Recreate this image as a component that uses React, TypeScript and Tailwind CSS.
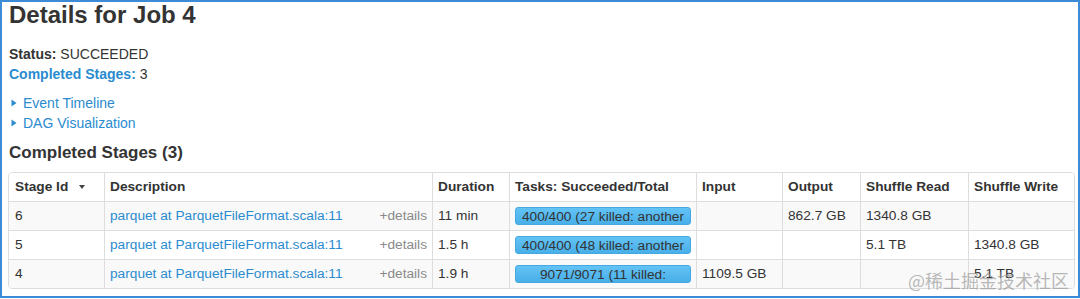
import React from "react";

type Stage = {
  id: string;
  desc: string;
  duration: string;
  tasks: string;
  input: string;
  output: string;
  shuffleRead: string;
  shuffleWrite: string;
};

const stages: Stage[] = [
  {
    id: "6",
    desc: "parquet at ParquetFileFormat.scala:11",
    duration: "11 min",
    tasks: "400/400 (27 killed: another attempt succeeded)",
    input: "",
    output: "862.7 GB",
    shuffleRead: "1340.8 GB",
    shuffleWrite: "",
  },
  {
    id: "5",
    desc: "parquet at ParquetFileFormat.scala:11",
    duration: "1.5 h",
    tasks: "400/400 (48 killed: another attempt succeeded)",
    input: "",
    output: "",
    shuffleRead: "5.1 TB",
    shuffleWrite: "1340.8 GB",
  },
  {
    id: "4",
    desc: "parquet at ParquetFileFormat.scala:11",
    duration: "1.9 h",
    tasks: "9071/9071 (11 killed: another attempt succeeded)",
    input: "1109.5 GB",
    output: "",
    shuffleRead: "",
    shuffleWrite: "5.1 TB",
  },
];

const cols = "grid grid-cols-[95px_328px_77px_187px_86px_78px_108px_107px]";

function Arrow() {
  return (
    <svg width="6" height="8" viewBox="0 0 6 8" className="shrink-0">
      <path d="M0.5 0.5 L5.5 4 L0.5 7.5 Z" fill="#2a8bcf" />
    </svg>
  );
}

function Bar({ text }: { text: string }) {
  return (
    <div className="h-[18px] w-full overflow-hidden rounded-[3px] border border-[#45a8e3] bg-gradient-to-b from-[#63c3f5] to-[#48afe9] px-[2px] text-center text-[13.7px] leading-[17px] text-[#333]">
      {text}
    </div>
  );
}

function App() {
  return (
    <div className="h-[299px] w-[1080px] bg-white font-['Liberation_Sans',Arial,sans-serif] text-[#333]">
      <div className="relative h-[298px] w-[1080px] overflow-hidden border-2 border-[#3d8bd6] pl-[6px] pr-[1px]">
        <h3 className="mt-[1px] pl-[1px] text-[24px] font-bold leading-[24px] text-[#333]">Details for Job 4</h3>

        <div className="mt-[17px] pl-[1px] text-[14px] leading-[20px]">
          <div>
            <strong>Status:</strong> SUCCEEDED
          </div>
          <div>
            <a href="#completed" className="font-bold text-[#2a8bcf]">Completed Stages:</a> 3
          </div>
        </div>

        <div className="mt-[9px] pl-[3px] text-[14px] leading-[20px] text-[#2a8bcf]">
          <div className="flex items-center gap-[6px]">
            <Arrow />
            <span>Event Timeline</span>
          </div>
          <div className="flex items-center gap-[6px]">
            <Arrow />
            <span>DAG Visualization</span>
          </div>
        </div>

        <h4 id="completed" className="mt-[10px] pl-[1px] text-[17px] font-bold leading-[20px]">Completed Stages (3)</h4>

        <div className="mt-[9px] w-[1067px] overflow-hidden rounded-[4px] border border-[#ddd] text-[13.7px]">
          <div className={`${cols} h-[28px] items-center bg-white font-bold`}>
            <div className="flex h-full items-center px-[6px]">
              Stage Id
              <svg width="6" height="4" viewBox="0 0 6 4" className="ml-[11px]">
                <path d="M0 0 L6 0 L3 4 Z" fill="#444" />
              </svg>
            </div>
            <div className="flex h-full items-center border-l border-[#ddd] px-[5px]">Description</div>
            <div className="flex h-full items-center border-l border-[#ddd] px-[5px]">Duration</div>
            <div className="flex h-full items-center border-l border-[#ddd] px-[5px]">Tasks: Succeeded/Total</div>
            <div className="flex h-full items-center border-l border-[#ddd] px-[5px]">Input</div>
            <div className="flex h-full items-center border-l border-[#ddd] px-[5px]">Output</div>
            <div className="flex h-full items-center border-l border-[#ddd] px-[5px]">Shuffle Read</div>
            <div className="flex h-full items-center border-l border-[#ddd] px-[5px]">Shuffle Write</div>
          </div>

          {stages.map((s, i) => (
            <div
              key={s.id}
              className={`${cols} h-[29px] border-t border-[#ddd] ${i % 2 === 0 ? "bg-[#f9f9f9]" : "bg-white"}`}
            >
              <div className="flex items-center px-[6px]">{s.id}</div>
              <div className="flex items-center justify-between border-l border-[#ddd] px-[5px]">
                <a href="#" className="text-[#2a8bcf]">{s.desc}</a>
                <span className="text-[#8a8a8a]">+details</span>
              </div>
              <div className="flex items-center border-l border-[#ddd] px-[5px]">{s.duration}</div>
              <div className="flex items-center border-l border-[#ddd] px-[5px]">
                <Bar text={s.tasks} />
              </div>
              <div className="flex items-center border-l border-[#ddd] px-[5px]">{s.input}</div>
              <div className="flex items-center border-l border-[#ddd] px-[5px]">{s.output}</div>
              <div className="flex items-center border-l border-[#ddd] px-[5px]">{s.shuffleRead}</div>
              <div className="flex items-center border-l border-[#ddd] px-[5px]">{s.shuffleWrite}</div>
            </div>
          ))}
        </div>

        <div className="pointer-events-none absolute bottom-[5px] right-[9px] font-['Noto_Sans_CJK_SC',sans-serif] text-[18px] leading-[22px] text-[#9a9a9a]/70">
          @稀土掘金技术社区
        </div>
      </div>
    </div>
  );
}

export default App;
